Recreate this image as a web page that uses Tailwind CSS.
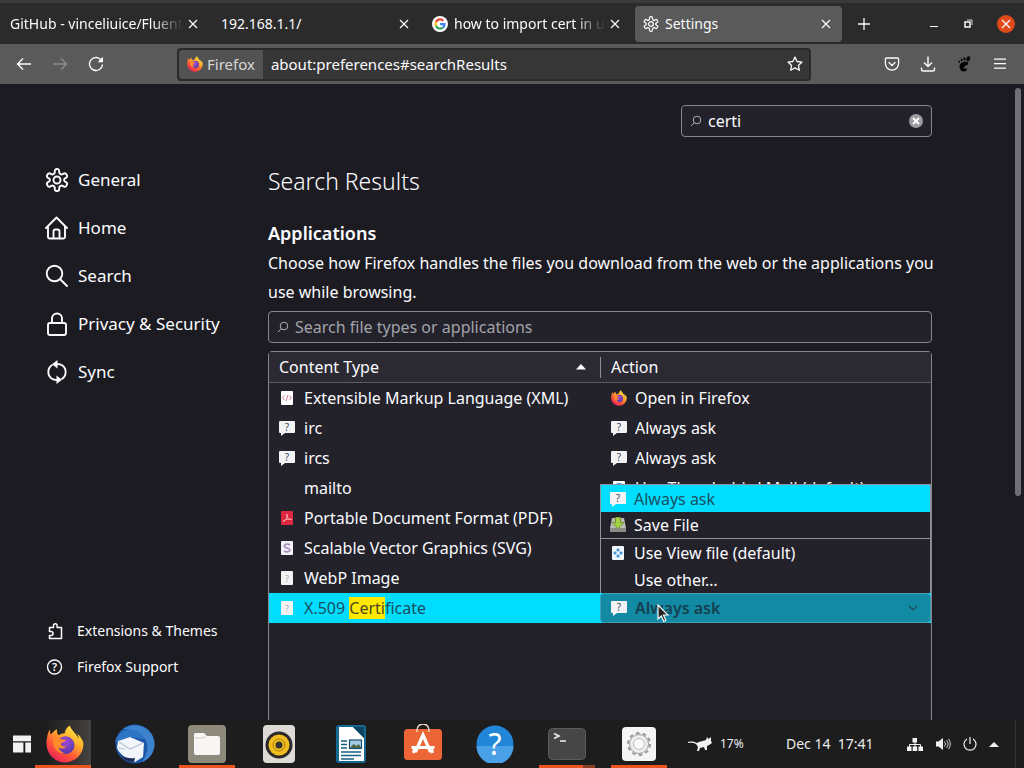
<!DOCTYPE html>
<html lang="en">

<head>
    <meta charset="UTF-8">
    <meta name="viewport" content="width=device-width, initial-scale=1.0">
    <title>Settings</title>
    <script src="https://cdn.jsdelivr.net/npm/@tailwindcss/browser@4"></script>
</head>

<body class="h-screen flex flex-col overflow-hidden bg-[#1c1b22] text-[#fbfbfe] text-base font-['Noto_Sans','Open_Sans',sans-serif]">
    <!-- shared icons -->
    <svg class="absolute size-0" aria-hidden="true">
        <defs>
            <linearGradient id="flame" x1="0.85" y1="0" x2="0.2" y2="1">
                <stop offset="0" stop-color="#fff04a" />
                <stop offset=".35" stop-color="#ffb22a" />
                <stop offset=".65" stop-color="#ff5a36" />
                <stop offset="1" stop-color="#e8175f" />
            </linearGradient>
            <radialGradient id="globe" cx=".5" cy=".3" r=".8">
                <stop offset="0" stop-color="#a04bd8" />
                <stop offset="1" stop-color="#4a35a0" />
            </radialGradient>
        </defs>
        <symbol id="firefox" viewBox="0 0 32 32">
            <path fill="url(#flame)" d="M30 12c-.8-2-2.400-4-3.800-4.700 1 2 1.500 3.600 1.700 5C25.500 7 21.500 5 20 .5c-3 1.700-4 4.500-4.200 6.500-2 .1-3.800.7-5.200 1.600C9.500 7.500 9 5.500 9.300 3.500 7 4.600 5.200 6.400 4 8c-.7-.9-.6-3.800-.5-4.400C1.800 5.500 1 9 1 10.500.400 12.500.2 15 .6 18 1.800 25.500 8.200 31.500 16 31.500c8.600 0 15.500-6.800 15.500-15.400 0-1.500-.4-2.900-1.500-4.100z" />
            <circle cx="16.500" cy="17" r="7.500" fill="url(#globe)" />
            <path fill="#ff8a2b" d="M6 11c2.500-1.500 5-.8 6.500.9 1.500.2 3.500.2 4 .7-.2 1.800-3.500 2-4 3.500-.2 1.500 2 2.500 4.500 1.500-1.500 2.500-4.500 2.500-6.500 1.500 1 2.500 3 4 5.500 4.500C10 25 5 19 6 11z" />
        </symbol>
        <symbol id="gear" viewBox="0 0 24 24">
            <g fill="none" stroke="currentColor" stroke-width="1.900">
                <path d="M12.220 1h-.44a2 2 0 0 0-2 2v1.180a2 2 0 0 1-1 1.730l-.43.25a2 2 0 0 1-2 0l-.95-.58a2 2 0 0 0-2.730.73l-.42.78a2 2 0 0 0 .73 2.730l.95.5a2 2 0 0 1 1 1.680 2 2 0 0 1-1 1.680l-.95.5a2 2 0 0 0-.73 2.730l.42.78a2 2 0 0 0 2.730.73l.95-.58a2 2 0 0 1 2 0l.43.25a2 2 0 0 1 1 1.730V21a2 2 0 0 0 2 2h.44a2 2 0 0 0 2-2v-1.180a2 2 0 0 1 1-1.730l.43-.25a2 2 0 0 1 2 0l.95.58a2 2 0 0 0 2.730-.73l.42-.78a2 2 0 0 0-.73-2.730l-.95-.5a2 2 0 0 1-1-1.680 2 2 0 0 1 1-1.680l.95-.5a2 2 0 0 0 .73-2.730l-.42-.78a2 2 0 0 0-2.730-.73l-.95.58a2 2 0 0 1-2 0l-.43-.25a2 2 0 0 1-1-1.730V3a2 2 0 0 0-2-2z" />
                <circle cx="12" cy="12" r="3.500" />
            </g>
        </symbol>
        <symbol id="close" viewBox="0 0 10 10">
            <path d="M1 1l8 8M9 1L1 9" fill="none" stroke="currentColor" stroke-width="1.200" />
        </symbol>
        <symbol id="lens" viewBox="0 0 12 12">
            <path d="M4.300 7.700L1 11" stroke="currentColor" fill="none" />
            <circle cx="7" cy="5" r="3.800" stroke="currentColor" fill="none" />
        </symbol>
        <symbol id="ask" viewBox="0 0 16 16">
            <path fill="#f3f3f6" d="M1 1h14a1 1 0 0 1 1 1v10a1 1 0 0 1-1 1H6l-4 3v-3H1a1 1 0 0 1-1-1V2a1 1 0 0 1 1-1z" />
            <text x="8" y="10.500" text-anchor="middle" font-size="10" fill="#3c4858">?</text>
        </symbol>
        <symbol id="unknown" viewBox="0 0 16 16">
            <rect x="2" y="1" width="12" height="14" rx="1" fill="#f3f3f3" />
            <text x="8" y="11.500" text-anchor="middle" font-size="9" fill="#a9a9b2">?</text>
        </symbol>
    </svg>

    <!-- tab strip -->
    <header class="h-11 shrink-0 flex items-center gap-1 px-0.5 bg-[#2b2b2b] border-t-3 border-[#3a3a3a] text-sm">
        <div class="w-[207px] h-9 flex items-center pl-2 pr-2.5">
            <span class="flex-1 overflow-hidden whitespace-nowrap [mask-image:linear-gradient(to_right,#000_82%,transparent)]">GitHub - vinceliuice/Fluent-gtk</span>
            <button class="p-px ml-1" aria-label="Close tab"><svg class="size-2.5"><use href="#close" /></svg></button>
        </div>
        <div class="w-[207px] h-9 flex items-center pl-2 pr-2.5">
            <span class="flex-1 overflow-hidden whitespace-nowrap">192.168.1.1/</span>
            <button class="p-px ml-1" aria-label="Close tab"><svg class="size-2.5"><use href="#close" /></svg></button>
        </div>
        <div class="w-[207px] h-9 flex items-center pl-2 pr-2.5">
            <svg class="size-4 mr-1.5" viewBox="0 0 16 16">
                <circle cx="8" cy="8" r="8" fill="#fff" />
                <g fill="none" stroke-width="2.200">
                    <path stroke="#ea4335" d="M4 6a4.500 4.500 0 0 1 7.400-1.200" />
                    <path stroke="#fbbc05" d="M4 6a4.500 4.500 0 0 0 0 4" />
                    <path stroke="#34a853" d="M4 10a4.500 4.500 0 0 0 7 1.500" />
                    <path stroke="#4285f4" d="M11 11.500A4.500 4.500 0 0 0 12.500 8.200H8" />
                </g>
            </svg>
            <span class="flex-1 overflow-hidden whitespace-nowrap [mask-image:linear-gradient(to_right,#000_80%,transparent)]">how to import cert in ubuntu</span>
            <button class="p-px ml-1" aria-label="Close tab"><svg class="size-2.5"><use href="#close" /></svg></button>
        </div>
        <div class="w-[207px] h-9 flex items-center pl-2 pr-2.5 rounded bg-[#5a5a5a]">
            <svg class="size-4 mr-1.5"><use href="#gear" /></svg>
            <span class="flex-1 overflow-hidden whitespace-nowrap">Settings</span>
            <button class="p-px ml-1" aria-label="Close tab"><svg class="size-2.5"><use href="#close" /></svg></button>
        </div>
        <button class="ml-3" aria-label="New tab">
            <svg class="size-3" viewBox="0 0 12 12"><path d="M6 0v12M0 6h12" stroke="currentColor" stroke-width="1.300" /></svg>
        </button>
        <div class="ml-auto mr-[7px] flex items-center gap-6">
            <button aria-label="Minimize"><svg class="size-2.5" viewBox="0 0 10 10"><path d="M1 7.500h8" stroke="currentColor" /></svg></button>
            <button aria-label="Restore">
                <svg class="size-2.5" viewBox="0 0 10 10" fill="none" stroke="currentColor"><path d="M2 3h5v5H2z" stroke-width="1.500" /><path d="M4 1h5v5" stroke-width=".8" /></svg>
            </button>
            <button class="size-[18px] grid place-items-center rounded-full bg-[#e0491b]" aria-label="Close window"><svg class="size-2.5"><use href="#close" /></svg></button>
        </div>
    </header>

    <!-- navigation bar -->
    <nav class="h-10 shrink-0 flex items-center bg-[#5a5a5a] px-4">
        <div class="flex gap-5">
            <button aria-label="Back"><svg class="size-4" viewBox="0 0 16 16" fill="none" stroke="currentColor" stroke-width="1.400"><path d="M15 8H1.500M7 2.500L1.500 8 7 13.500" /></svg></button>
            <button class="text-[#8c8c8c]" aria-label="Forward" disabled><svg class="size-4" viewBox="0 0 16 16" fill="none" stroke="currentColor" stroke-width="1.400"><path d="M1 8h13.500M9 2.500L14.500 8 9 13.500" /></svg></button>
            <button aria-label="Reload">
                <svg class="size-4" viewBox="0 0 16 16"><path d="M13.500 4.500A6.500 6.500 0 1 0 14.500 8.500" fill="none" stroke="currentColor" stroke-width="1.400" /><path d="M15 .8v5.400H9.600z" fill="currentColor" /></svg>
            </button>
        </div>
        <div class="flex-1 h-[33px] mx-[73px] flex items-center rounded border-2 border-[#2a2a2a] bg-[#363636] text-[15px]">
            <span class="h-full flex items-center gap-1 px-2 rounded-l-sm bg-[#525252] text-[#d8d8d8]"><svg class="size-4"><use href="#firefox" /></svg>Firefox</span>
            <label class="flex-1 flex">
                <span class="sr-only">Address</span>
                <input class="flex-1 pl-2 outline-none" type="text" value="about:preferences#searchResults">
            </label>
            <button class="mr-1.5" aria-label="Bookmark">
                <svg class="size-4" viewBox="0 0 16 16" fill="none" stroke="currentColor" stroke-width="1.300" stroke-linejoin="round"><path d="M8 1l2.100 4.500 4.900.6-3.600 3.300 1 4.900L8 11.900l-4.400 2.400 1-4.900L1 6.100l4.900-.6z" /></svg>
            </button>
        </div>
        <div class="flex items-center gap-5">
            <button aria-label="Pocket"><svg class="size-4" viewBox="0 0 16 16" fill="none" stroke="currentColor" stroke-width="1.300" stroke-linecap="round"><path d="M2.500 2h11a1 1 0 0 1 1.100 1v4.500a6.600 6.600 0 0 1-13.200 0V3a1 1 0 0 1 1.100-1z" /><path d="M5 6.500l3 3 3-3" /></svg></button>
            <button aria-label="Downloads"><svg class="size-4" viewBox="0 0 16 16" fill="none" stroke="currentColor" stroke-width="1.400"><path d="M8 .5v10M4 6.500l4 4 4-4M1.500 11.500v2a1.500 1.500 0 0 0 1.500 1.500h10a1.500 1.500 0 0 0 1.500-1.500v-2" /></svg></button>
            <button class="text-[#050505]" aria-label="GNOME Shell integration">
                <svg class="size-4" viewBox="0 0 16 16" fill="currentColor"><path d="M11.500 6C8 5 3.500 7 3.500 10.500 3.500 13.500 5.500 15.500 7.500 15.500c2.500 0 3.800-2 3.300-3-.5-.8-1.800.8-2.800 0-1-1 .8-2.200 2.500-3.200C12.500 8.500 13 6.500 11.500 6z" /><ellipse cx="12.300" cy="2.700" rx="1.800" ry="2.500" transform="rotate(20 12.300 2.700)" /><ellipse cx="8.500" cy="2.900" rx="1" ry="1.700" /><ellipse cx="5.700" cy="4" rx=".9" ry="1.400" /><ellipse cx="3.200" cy="5.800" rx=".8" ry="1.200" transform="rotate(-20 3.200 5.800)" /></svg>
            </button>
            <button aria-label="Menu"><svg class="size-4" viewBox="0 0 16 16"><path d="M2 3.200h12M2 7.700h12M2 12.200h12" stroke="currentColor" stroke-width="1.300" /></svg></button>
        </div>
    </nav>

    <!-- preferences page -->
    <div class="relative flex-1 min-h-0 flex overflow-hidden">
        <aside class="w-[268px] shrink-0 flex flex-col pl-[45px] pt-[72px] pb-[35px] text-[17px]">
            <a href="#general" class="h-12 flex items-center gap-[9px]">
                <svg class="size-6"><use href="#gear" /></svg>General</a>
            <a href="#home" class="h-12 flex items-center gap-[9px]">
                <svg class="size-6" viewBox="0 0 24 24" fill="none" stroke="currentColor" stroke-width="1.900" stroke-linecap="round" stroke-linejoin="round"><path d="M1 12L11.500 1.500 22 12M3 10.500V21a1.500 1.500 0 0 0 1.500 1.500h14A1.500 1.500 0 0 0 20 21V10.500M8.500 22v-6.500a2 2 0 0 1 2-2h2a2 2 0 0 1 2 2V22" /></svg>Home</a>
            <a href="#search" class="h-12 flex items-center gap-[9px]">
                <svg class="size-6" viewBox="0 0 24 24" fill="none" stroke="currentColor" stroke-width="1.900" stroke-linecap="round"><circle cx="9.500" cy="9.500" r="7.800" /><path d="M15 15l7 7" /></svg>Search</a>
            <a href="#privacy" class="h-12 flex items-center gap-[9px]">
                <svg class="size-6" viewBox="0 0 24 24" fill="none" stroke="currentColor" stroke-width="1.900"><rect x="3" y="11" width="18" height="12" rx="2" /><path d="M7 11V6.500a5 5 0 0 1 10 0V11" /></svg>Privacy &amp; Security</a>
            <a href="#sync" class="h-12 flex items-center gap-[9px]">
                <svg class="size-6" viewBox="0 0 24 24"><path d="M7.500 4.800A8.300 8.300 0 0 0 6.500 18.500M16.500 19.200A8.300 8.300 0 0 0 17.500 5.500M12 4c2.200 0 4 .4 5.500 1.500M12 20c-2.200 0-4-.4-5.500-1.500" fill="none" stroke="currentColor" stroke-width="1.900" /><path d="M12.500 0v8.500L7 4.200zM11.500 24v-8.500l5.500 4.300z" fill="currentColor" /></svg>Sync</a>
            <div class="mt-auto text-sm">
                <a href="#addons" class="h-9 flex items-center gap-3.5">
                    <svg class="size-[18px]" viewBox="0 0 18 18" fill="none" stroke="currentColor" stroke-width="1.500" stroke-linejoin="round"><path d="M4.500 5.500h4V3.500a1.800 1.800 0 0 1 3.600 0v2h4.400V16.500H4.500v-3H6a1.900 1.900 0 0 0 0-4H4.500z" /></svg>Extensions &amp; Themes</a>
                <a href="#support" class="h-9 flex items-center gap-3.5">
                    <svg class="size-[18px]" viewBox="0 0 18 18"><circle cx="9.500" cy="9" r="7" fill="none" stroke="currentColor" stroke-width="1.400" /><text x="9.500" y="13" text-anchor="middle" font-size="11" font-weight="600" fill="currentColor">?</text></svg>Firefox Support</a>
            </div>
        </aside>

        <main class="flex-1 max-w-[664px] pt-[21px]">
            <label class="w-[251px] h-8 ml-auto flex items-center rounded-sm border border-[#85858e] bg-[#23222b] px-2">
                <span class="sr-only">Find in Settings</span>
                <svg class="size-3 shrink-0 text-[#b0b0b8]"><use href="#lens" /></svg>
                <input class="flex-1 min-w-0 pl-1.5 outline-none" type="text" value="certi">
                <button class="size-3.5 grid place-items-center rounded-full bg-[#9b9ba1]" aria-label="Clear">
                    <svg class="size-2" viewBox="0 0 8 8"><path d="M1 1l6 6M7 1L1 7" stroke="#fff" stroke-width="1.800" /></svg>
                </button>
            </label>
            <h1 class="mt-7 text-[23px] leading-8 font-light">Search Results</h1>
            <h2 class="mt-6 text-lg leading-6 font-semibold">Applications</h2>
            <p class="mt-1 -mr-2 leading-[29px]">Choose how Firefox handles the files you download from the web or the applications you use while browsing.</p>
            <label class="h-8 mt-1 flex items-center rounded-sm border border-[#85858e] bg-[#23222b] px-2">
                <span class="sr-only">Search file types or applications</span>
                <svg class="size-3 text-[#b0b0b8]"><use href="#lens" /></svg>
                <input class="flex-1 pl-1.5 outline-none placeholder:text-[#a3a3aa]" type="text" placeholder="Search file types or applications">
            </label>

            <div class="mt-2 h-96 rounded-sm border border-[#85858e] bg-[#23222b]">
                <table class="w-full table-fixed border-separate border-spacing-0">
                    <thead class="bg-[#2b2a33]">
                        <tr class="h-[31px]">
                            <th class="w-1/2 p-0 border-b border-[#5b5b66] font-normal text-left">
                                <div class="flex items-center justify-between pl-2.5 pr-3.5">Content Type
                                    <svg class="w-2.5 h-1.5" viewBox="0 0 10 6"><path d="M5 0l5 5.500H0z" fill="currentColor" /></svg>
                                </div>
                            </th>
                            <th class="p-0 border-b border-[#5b5b66] font-normal text-left">
                                <div class="h-[21px] flex items-center pl-2.5 border-l border-[#8f8f9d]">Action</div>
                            </th>
                        </tr>
                    </thead>
                    <tbody>
                        <tr class="h-[30px]">
                            <td class="p-0"><div class="flex items-center gap-[9px] pl-2.5">
                                <svg class="size-4" viewBox="0 0 16 16"><rect x="2" y="1" width="12" height="14" rx="1" fill="#fff" /><path d="M5.500 5.500L3.500 8l2 2M10.500 5.500l2 2.500-2 2M9 5l-2 6" fill="none" stroke="#d06a88" stroke-width=".9" /></svg>Extensible Markup Language (XML)</div></td>
                            <td class="p-0"><div class="flex items-center gap-2 pl-[11px]"><svg class="size-4"><use href="#firefox" /></svg>Open in Firefox</div></td>
                        </tr>
                        <tr class="h-[30px]">
                            <td class="p-0"><div class="flex items-center gap-[9px] pl-2.5"><svg class="size-4"><use href="#ask" /></svg>irc</div></td>
                            <td class="p-0"><div class="flex items-center gap-2 pl-[11px]"><svg class="size-4"><use href="#ask" /></svg>Always ask</div></td>
                        </tr>
                        <tr class="h-[30px]">
                            <td class="p-0"><div class="flex items-center gap-[9px] pl-2.5"><svg class="size-4"><use href="#ask" /></svg>ircs</div></td>
                            <td class="p-0"><div class="flex items-center gap-2 pl-[11px]"><svg class="size-4"><use href="#ask" /></svg>Always ask</div></td>
                        </tr>
                        <tr class="h-[30px]">
                            <td class="p-0 pl-[35px]">mailto</td>
                            <td class="p-0"><div class="flex items-center gap-2 pl-[11px]"><svg class="size-4" viewBox="0 0 16 16"><rect x="2" y="1" width="12" height="14" rx="1" fill="#fff" /><circle cx="8" cy="8" r="5" fill="#3a8ed8" /></svg>Use Thunderbird Mail (default)</div></td>
                        </tr>
                        <tr class="h-[30px]">
                            <td class="p-0"><div class="flex items-center gap-[9px] pl-2.5">
                                <svg class="size-4" viewBox="0 0 16 16"><rect x="2" y="1" width="12" height="14" rx="1" fill="#dc2840" /><path d="M4 11.500C8 10 9 6 8 4c-1.500 1 1 6 4.500 5.500C9 8.500 6 9.500 4 11.500z" fill="none" stroke="#ffb5bd" stroke-width=".9" /></svg>Portable Document Format (PDF)</div></td>
                            <td class="p-0"></td>
                        </tr>
                        <tr class="h-[30px]">
                            <td class="p-0"><div class="flex items-center gap-[9px] pl-2.5">
                                <svg class="size-4" viewBox="0 0 16 16"><rect x="2" y="1" width="12" height="14" rx="1" fill="#f4f0f8" /><path d="M11 5C8 3 5 4.500 5.500 6.500S11 8 11 10s-3.500 2.500-6 .8" fill="none" stroke="#a48cba" stroke-width="1.600" /></svg>Scalable Vector Graphics (SVG)</div></td>
                            <td class="p-0"></td>
                        </tr>
                        <tr class="h-[30px]">
                            <td class="p-0"><div class="flex items-center gap-[9px] pl-2.5"><svg class="size-4"><use href="#unknown" /></svg>WebP Image</div></td>
                            <td class="p-0"></td>
                        </tr>
                        <tr class="h-[30px] bg-[#00ddff] text-[#1c4f60]">
                            <td class="p-0"><div class="flex items-center gap-[9px] pl-2.5"><svg class="size-4"><use href="#unknown" /></svg>
                                <span>X.509 <mark class="bg-[#ffe900] text-[#4f4a22]">Certi</mark>ficate</span></div></td>
                            <td class="p-0">
                                <div class="relative h-[30px] flex items-center rounded-sm border border-[#3d9fb4] bg-[#128aa4] pl-2.5 pr-3">
                                    <svg class="size-4 shrink-0"><use href="#ask" /></svg>
                                    <label class="flex-1 flex">
                                        <span class="sr-only">Action for X.509 Certificate</span>
                                        <select class="flex-1 appearance-none pl-2 font-semibold text-[#15414f] outline-none">
                                            <option>Always ask</option>
                                            <option>Save File</option>
                                            <option>Use View file (default)</option>
                                            <option>Use other…</option>
                                        </select>
                                    </label>
                                    <svg class="w-2.5 h-1.5" viewBox="0 0 10 6"><path d="M1 .8l4 4 4-4" fill="none" stroke="#1c4f60" stroke-width="1.300" /></svg>

                                    <!-- open action menu -->
                                    <ul class="absolute bottom-full mb-px -inset-x-px border-x border-t border-[#8f8f9d] bg-[#23222b] text-[#fbfbfe]" role="listbox" aria-label="Action">
                                        <li class="h-[27px] flex items-center gap-2 pl-[9px] bg-[#00ddff] text-[#1c4f60]" role="option" aria-selected="true"><svg class="size-4"><use href="#ask" /></svg>Always ask</li>
                                        <li class="h-[27px] flex items-center gap-2 pl-[9px] border-b border-[#8f8f9d]" role="option">
                                            <svg class="size-4" viewBox="0 0 16 16"><path d="M2 1h12l2 10v4H0v-4z" fill="#b9bbb4" /><path d="M0 11h16v4H0z" fill="#8b8d86" /><path d="M5.500 0h5v5.500H14L8 11.500 2 5.500h3.500z" fill="#a4d044" stroke="#5f8220" stroke-width=".8" /></svg>Save File</li>
                                        <li class="h-[27px] flex items-center gap-2 pl-[9px]" role="option">
                                            <svg class="size-4" viewBox="0 0 16 16"><rect x="2" y="1" width="12" height="14" rx="1" fill="#eef5fb" /><path d="M8 3l2 2-2 2-2-2zM8 9l2 2-2 2-2-2zM5 6l2 2-2 2-2-2zM11 6l2 2-2 2-2-2z" fill="#4a9ade" /></svg>Use View file (default)</li>
                                        <li class="h-[27px] flex items-center pl-[33px]" role="option">Use other…</li>
                                    </ul>

                                    <!-- mouse pointer -->
                                    <svg class="absolute left-14 top-2.5 w-3 h-[19px]" viewBox="0 0 12 19"><path d="M1 1v14l3.300-3 2.400 5.500 2.200-1L6.500 11H11z" fill="#222" stroke="#fff" stroke-width="1.200" /></svg>
                                </div>
                            </td>
                        </tr>
                    </tbody>
                </table>
            </div>
        </main>

        <!-- scrollbar thumb -->
        <div class="absolute right-[3px] top-1 w-1.5 h-[408px] rounded-full bg-[#6f6f76]"></div>
    </div>

    <!-- desktop panel -->
    <footer class="h-12 shrink-0 flex items-center bg-[#1d1d1d] text-[13px] text-[#ececec]">
        <button class="w-[27px] pl-[13px] shrink-0" aria-label="Workspaces">
            <svg class="w-[18px] h-[18px] max-w-none" viewBox="0 0 19 18" fill="#f2f2f2"><path d="M0 0h19v6H0zM0 7.500h11V18H0zM13 7.500h6V18h-6z" /></svg>
        </button>
        <div class="flex h-full">
            <button class="w-14 mx-2 h-full flex items-center justify-center border-y-3 border-t-transparent border-b-[#e95420] bg-linear-to-r from-[#1d1d1d] from-20% to-[#454340]" aria-label="Firefox">
                <svg class="size-[38px] shrink-0 ml-1"><use href="#firefox" /></svg>
            </button>
            <button class="w-14 mx-2 h-full flex items-center justify-center" aria-label="Thunderbird">
                <svg class="size-10" viewBox="0 0 40 40">
                    <circle cx="20" cy="20" r="19.500" fill="#1d58a8" />
                    <path d="M8 5C18-3 36 2 39 16c2 10-3 19-12 22 6-8 7-18 3-23C26 8 14 5 8 5z" fill="#3d82cd" />
                    <path d="M0 18C2 10 10 4 18 6c6 1 10 5 11 9L14 13z" fill="#2c74c4" />
                    <path d="M3 17l12-4 14 6-1 14-8 5C11 36 4 29 2 24z" fill="#f2f5fa" />
                    <path d="M4 18l11 7 13-6M3 24l7 1" fill="none" stroke="#b8c4d8" stroke-width="1.200" />
                    <path d="M5 30c5 4 10 5 15 4l-1 4C12 38 8 35 5 30z" fill="#202c58" />
                </svg>
            </button>
            <button class="w-14 mx-2 h-full flex items-center justify-center border-y-3 border-t-transparent border-b-[#e95420]" aria-label="Files">
                <svg class="size-[38px] shrink-0" viewBox="0 0 38 38"><rect width="38" height="38" rx="4" fill="#8d897b" /><path d="M7 8h9l3 3h11a2 2 0 0 1 2 2v15a2 2 0 0 1-2 2H8a2 2 0 0 1-2-2V9z" fill="#f7f6f4" /><path d="M7 13h8l3-2" fill="none" stroke="#cfccc4" /></svg>
            </button>
            <button class="w-14 mx-2 h-full flex items-center justify-center" aria-label="Rhythmbox">
                <svg class="w-8 h-[38px]" viewBox="0 0 32 38"><rect width="32" height="38" rx="4" fill="#dedad5" /><circle cx="16" cy="20" r="13.500" fill="#2c2a28" /><circle cx="16" cy="20" r="10.500" fill="#f0bd1e" /><circle cx="16" cy="20" r="6" fill="none" stroke="#a87f10" /><circle cx="16" cy="20" r="3.500" fill="#333" /></svg>
            </button>
            <button class="w-14 mx-2 h-full flex items-center justify-center" aria-label="LibreOffice Writer">
                <svg class="w-8 h-[38px]" viewBox="0 0 32 38"><rect x="1" width="30" height="38" rx="3" fill="#15688f" /><path d="M4 2h14l11 11v23H4z" fill="#fff" /><path d="M18 2l11 11V2z" fill="#0c4564" /><path d="M6 16h6M6 19.500h6M6 23h6M6 27h20M6 30.500h20M6 34h13" stroke="#17607f" stroke-width="1.500" /><rect x="14.500" y="15" width="12" height="8.500" fill="#a5cbe2" stroke="#17506e" stroke-width="1.200" /><path d="M15 23l3.500-4 3 2 2-2 3 4z" fill="#4a6741" /></svg>
            </button>
            <button class="w-14 mx-2 h-full flex items-center justify-center" aria-label="Ubuntu Software">
                <svg class="w-[38px] h-10" viewBox="0 0 38 40"><rect y="5" width="38" height="31" rx="3.500" fill="#eb6536" /><path d="M13 8V6a6 6 0 0 1 12 0v2" fill="none" stroke="#f7d6c5" stroke-width="1.500" /><path d="M11.500 28L19 11l7.500 17M7.500 23.500h23M11 24l-1.500 5M27 24l1.500 5" fill="none" stroke="#fff" stroke-width="3.200" /></svg>
            </button>
            <button class="w-14 mx-2 h-full flex items-center justify-center" aria-label="Help">
                <svg class="size-[38px]" viewBox="0 0 38 38"><circle cx="19" cy="19" r="18.500" fill="#2186d8" /><path d="M.5 21h37a18.500 18.500 0 0 1-37 0z" fill="#4aa0e6" /><text x="19" y="30" text-anchor="middle" font-size="30" fill="#fff">?</text></svg>
            </button>
            <button class="relative w-14 mx-2 h-full flex items-center justify-center border-y-3 border-t-transparent border-b-[#e95420]" aria-label="Terminal">
                <svg class="w-[38px] h-8" viewBox="0 0 38 32"><rect x=".5" y=".5" width="37" height="31" rx="4" fill="#464646" stroke="#5c5c5c" /><path d="M6 5.500l5 2.500-5 2.500M12 13h6" fill="none" stroke="#eee" stroke-width="1.500" /></svg>
                <span class="absolute right-0 -bottom-[3px] w-3 h-[3px] bg-[#8a4028]"></span>
            </button>
            <button class="w-14 mx-2 h-full flex items-center justify-center border-y-3 border-t-transparent border-b-[#e95420]" aria-label="Settings">
                <svg class="size-[34px]" viewBox="0 0 34 34"><rect width="34" height="34" rx="4" fill="#f5f5f5" /><circle cx="17" cy="17" r="11" fill="none" stroke="#999" stroke-width="2" stroke-dasharray="3.600 3.312" /><circle cx="17" cy="17" r="9.500" fill="#eee" stroke="#999" /><circle cx="17" cy="17" r="5.500" fill="#fafafa" stroke="#bbb" /></svg>
            </button>
        </div>
        <div class="ml-auto h-full flex items-center mr-2">
            <svg class="w-6 h-4 mr-2" viewBox="0 0 24 16" fill="#f2f2f2"><path d="M0 6c4-1 7 0 9 1 3-2 7-2 9-3l1-3 1.500 2L23 1v4l1 2-3 2-2 1v4h-2l-1-3-4 1-1 3H9l1-4-2-3C6 7 3 6.500 0 7z" /></svg>
            <span class="w-[66px] text-xs">17%</span>
            <time class="w-[121px] text-sm whitespace-pre">Dec 14  17:41</time>
            <div class="flex items-center gap-3">
                <svg class="size-4" viewBox="0 0 16 16" fill="#f2f2f2"><path d="M5.500 2h4.500v4.500H5.500zM0 10.500h4.500V15H0zM5.700 10.500h4.500V15H5.700zM11.500 10.500H16V15h-4.500z" /><path d="M8 6v5M2.500 11V8.500h11V11" fill="none" stroke="#f2f2f2" /></svg>
                <svg class="size-4" viewBox="0 0 16 16"><path d="M1 5.500h2.500L8 2v12l-4.500-3.500H1z" fill="#f2f2f2" /><path d="M9.500 5.500a4 4 0 0 1 0 5M11.500 4a6 6 0 0 1 0 8M13.500 2.800a9 9 0 0 1 0 10.400" fill="none" stroke="#d0d0d0" /></svg>
                <svg class="size-3.5" viewBox="0 0 14 14" fill="none" stroke="#f2f2f2" stroke-width="1.200"><path d="M4 2a6 6 0 1 0 6 0M7 0v7" /></svg>
                <svg class="w-2.5 h-[5px]" viewBox="0 0 10 5"><path d="M5 0l5 5H0z" fill="#f2f2f2" /></svg>
            </div>
            <span class="w-px h-full ml-4 bg-[#333]"></span>
        </div>
    </footer>
</body>

</html>
